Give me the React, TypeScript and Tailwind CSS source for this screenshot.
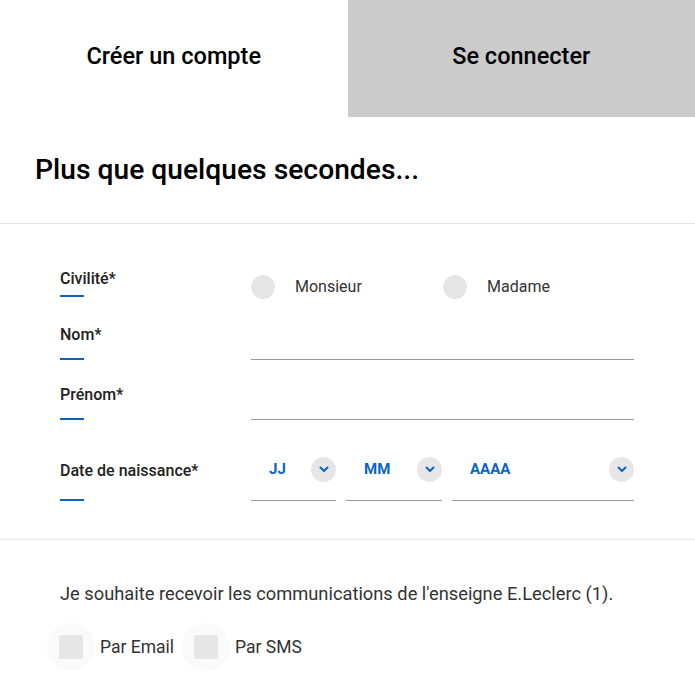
import React from "react";

const Chevron = () => (
  <svg width="10" height="7" viewBox="0 0 10 7" fill="none">
    <path d="M1.5 1.5 L5 5 L8.5 1.5" stroke="#0b63c5" strokeWidth="2" strokeLinecap="round" strokeLinejoin="round" />
  </svg>
);

const Radio = ({ label }: { label: string }) => (
  <label className="w-[192px] flex items-center">
    <span className="w-6 h-6 rounded-full bg-[#e6e6e6]" />
    <span className="ml-5 text-base text-[#333]">{label}</span>
  </label>
);

const FieldLabel = ({ text, gap }: { text: string; gap: string }) => (
  <div className="flex flex-col">
    <span className="text-base leading-5 font-['Roboto_Medium','Roboto',sans-serif] text-[#222]">{text}</span>
    <span className={`${gap} w-6 h-[2px] bg-[#0b63c5]`} />
  </div>
);

const DateSelect = ({ value, width }: { value: string; width: string }) => (
  <div className={`${width} h-[62px] flex items-center justify-between pl-[18px] border-b border-[#999]`}>
    <span className="text-[15px] font-bold text-[#0b63c5]">{value}</span>
    <span className="w-[25px] h-[25px] rounded-full bg-[#e6e6e6] flex items-center justify-center">
      <Chevron />
    </span>
  </div>
);

const Checkbox = ({ label }: { label: string }) => (
  <label className="flex items-center">
    <span className="w-12 h-12 rounded-full bg-[#fafafa] flex items-center justify-center">
      <span className="w-6 h-6 rounded-[2px] bg-[#e6e6e6]" />
    </span>
    <span className="ml-[5px] text-[17.5px] text-[#333]">{label}</span>
  </label>
);

export default function App() {
  return (
    <div className="w-[695px] bg-white font-['Roboto',sans-serif]">
      <div className="grid grid-cols-2 h-[117px] font-['Roboto_Medium','Roboto',sans-serif]">
        <div className="flex items-center justify-center pb-1 text-[23.5px] text-black">Créer un compte</div>
        <div className="flex items-center justify-center pb-1 bg-[#cbcbcb] text-[23.5px] text-black">Se connecter</div>
      </div>

      <div className="h-[107px] flex items-center px-[35px] border-b border-[#e5e5e5]">
        <h1 className="text-[28.2px] font-['Roboto_Medium','Roboto',sans-serif] text-black">Plus que quelques secondes...</h1>
      </div>

      <div className="pt-9 pb-[38px] pl-[60px] pr-[61px] border-b border-[#e5e5e5]">
        <div className="grid grid-cols-[191px_1fr] h-10">
          <div className="pt-[9px]">
            <FieldLabel text="Civilité*" gap="mt-[6px]" />
          </div>
          <div className="pt-[13px] flex">
            <Radio label="Monsieur" />
            <Radio label="Madame" />
          </div>
        </div>

        <div className="grid grid-cols-[191px_1fr] h-[60px] items-end">
          <FieldLabel text="Nom*" gap="mt-[13px]" />
          <div className="h-10 border-b border-[#999]" />
        </div>

        <div className="grid grid-cols-[191px_1fr] h-[60px] items-end">
          <FieldLabel text="Prénom*" gap="mt-[13px]" />
          <div className="h-10 border-b border-[#999]" />
        </div>

        <div className="grid grid-cols-[191px_1fr] h-[81px] items-end">
          <FieldLabel text="Date de naissance*" gap="mt-[18px]" />
          <div className="flex gap-[10px]">
            <DateSelect value="JJ" width="w-[85px]" />
            <DateSelect value="MM" width="w-[96px]" />
            <DateSelect value="AAAA" width="flex-1" />
          </div>
        </div>
      </div>

      <div className="pt-[43px] pb-4">
        <p className="px-[60px] text-[18.3px] leading-[22px] text-[#333]">
          Je souhaite recevoir les communications de l'enseigne E.Leclerc (1).
        </p>
        <div className="mt-[18px] pl-[47px] flex items-center gap-2">
          <Checkbox label="Par Email" />
          <Checkbox label="Par SMS" />
        </div>
      </div>
    </div>
  );
}
